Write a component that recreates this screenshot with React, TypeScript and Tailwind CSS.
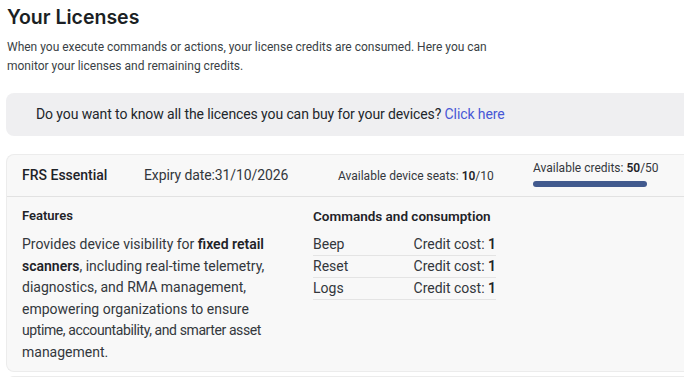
import React from "react";

export default function App() {
  const cmds = ["Beep", "Reset", "Logs"];
  return (
    <div className="w-[684px] h-[377px] overflow-hidden bg-white text-[#1f2328]" style={{ fontFamily: "Roboto, 'Liberation Sans', sans-serif" }}>
      <div className="pl-[7px] pt-[4px]">
        <h1 className="text-[19.5px] leading-[26px] font-semibold text-[#1b1f24]" style={{ fontFamily: "Inter, sans-serif" }}>Your Licenses</h1>
        <p className="mt-[8px] text-[12px] leading-[19px] text-[#3a3f45] w-[496px]">
          When you execute commands or actions, your license credits are consumed. Here you can monitor your licenses and remaining credits.
        </p>
      </div>
      <div className="ml-[6px] mt-[17px] h-[43px] rounded-l-[8px] bg-[#efeff1] flex items-center pl-[30px] text-[14px] tracking-[-0.1px] text-[#22262b]">
        <span>
          Do you want to know all the licences you can buy for your devices? <span className="text-[#4757d6]">Click here</span>
        </span>
      </div>
      <div className="ml-[6px] mt-[18px] rounded-l-[8px] bg-[#f8f8f8] border border-r-0 border-[#ececec]">
        <div className="flex items-center h-[42px] pl-[15px] border-b border-[#e2e2e2]">
          <span className="w-[122px] text-[14px] font-medium text-[#1f2328]">FRS Essential</span>
          <span className="w-[194px] text-[14px] tracking-[-0.1px] text-[#33373c]">Expiry date:31/10/2026</span>
          <span className="w-[195px] text-[12px] text-[#33373c]">
            Available device seats: <b className="font-semibold text-[#1f2328]">10</b>/10
          </span>
          <div className="flex flex-col -mt-[6px]">
            <span className="text-[12px] text-[#33373c]">
              Available credits: <b className="font-semibold text-[#1f2328]">50</b>/50
            </span>
            <div className="mt-[4px] w-[114px] h-[6px] rounded-full bg-[#425a8e]" />
          </div>
        </div>
        <div className="flex pl-[15px] pt-[10px] pb-[7px]">
          <div className="w-[291px]">
            <div className="text-[13px] font-semibold text-[#1f2328] leading-[18px]">Features</div>
            <p className="mt-[9px] text-[14px] leading-[21.6px] text-[#33373c] whitespace-nowrap">
              Provides device visibility for <b className="font-semibold text-[#1f2328]">fixed retail</b>
              <br />
              <b className="font-semibold text-[#1f2328]">scanners</b>, including real-time telemetry,
              <br />
              diagnostics, and RMA management,
              <br />
              empowering organizations to ensure
              <br />
              <span className="tracking-[-0.4px]">uptime, accountability, and smarter asset</span>
              <br />
              management.
            </p>
          </div>
          <div className="w-[183px]">
            <div className="text-[13.5px] font-semibold text-[#1f2328] leading-[18px] whitespace-nowrap">Commands and consumption</div>
            <div className="mt-[9px] text-[14px] text-[#33373c]">
              {cmds.map((c) => (
                <div key={c} className="flex justify-between h-[22px] items-center border-b border-[#e4e4e4]">
                  <span>{c}</span>
                  <span>
                    Credit cost: <b className="font-semibold text-[#1f2328]">1</b>
                  </span>
                </div>
              ))}
            </div>
          </div>
        </div>
      </div>
      <div className="ml-[6px] mt-[4px] h-[20px] rounded-l-[8px] bg-[#f8f8f8] border border-r-0 border-[#ececec]" />
    </div>
  );
}
